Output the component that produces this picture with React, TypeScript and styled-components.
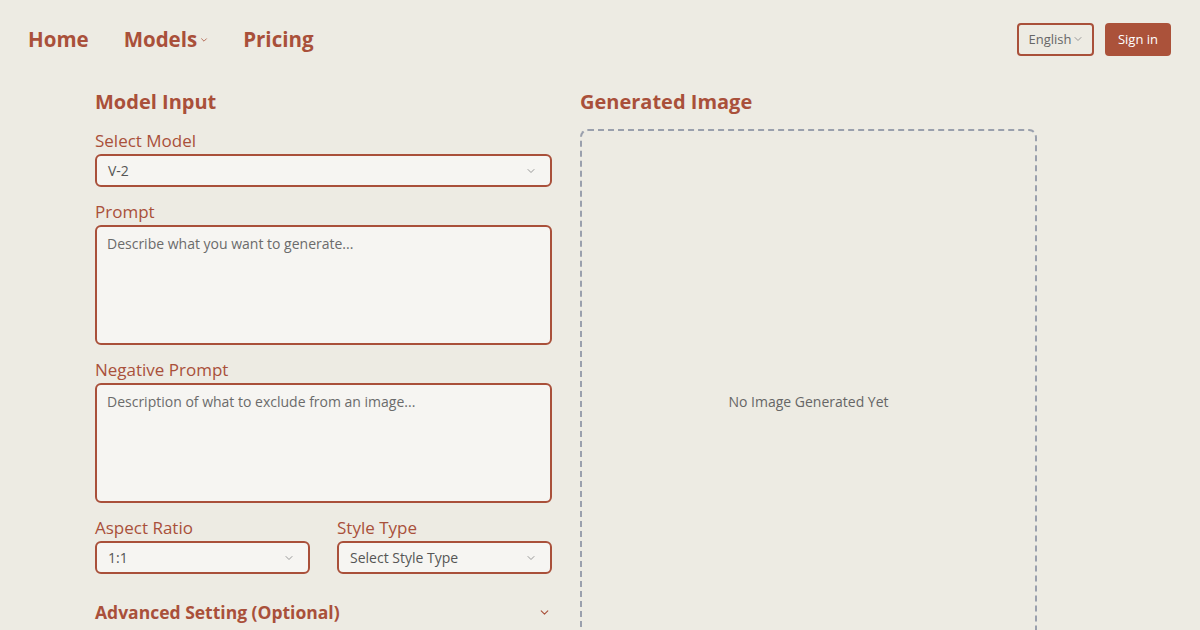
import React from 'react';
import styled, { createGlobalStyle } from 'styled-components';

const brown = '#a9503a';

const GlobalStyle = createGlobalStyle`
  html, body {
    margin: 0;
    padding: 0;
    background: #edebe3;
    font-family: "Open Sans", "Noto Sans", sans-serif;
  }
  * {
    box-sizing: border-box;
  }
`;

const Chevron: React.FC<{ size?: number; color?: string }> = ({ size = 10, color = '#999' }) => (
  <svg width={size} height={size} viewBox="0 0 10 10" fill="none">
    <path d="M2 3.5 L5 6.5 L8 3.5" stroke={color} strokeWidth="1" strokeLinecap="round" strokeLinejoin="round" />
  </svg>
);

const App: React.FC = () => {
  return (
    <Page>
      <GlobalStyle />
      <Header>
        <Nav>
          <NavLink>Home</NavLink>
          <NavLink>
            Models
            <NavCaret>
              <Chevron size={8} color={brown} />
            </NavCaret>
          </NavLink>
          <NavLink>Pricing</NavLink>
        </Nav>
        <Actions>
          <LangButton>
            English
            <Chevron size={10} color="#999" />
          </LangButton>
          <SignIn>Sign in</SignIn>
        </Actions>
      </Header>

      <Main>
        <Column>
          <Heading>Model Input</Heading>
          <Field>
            <Label>Select Model</Label>
            <Select>
              <SelectText>V-2</SelectText>
              <Chevron />
            </Select>
          </Field>
          <Field>
            <Label>Prompt</Label>
            <TextArea placeholder="Describe what you want to generate..." />
          </Field>
          <Field>
            <Label>Negative Prompt</Label>
            <TextArea placeholder="Description of what to exclude from an image..." />
          </Field>
          <Row>
            <Field>
              <Label>Aspect Ratio</Label>
              <Select>
                <SelectText>1:1</SelectText>
                <Chevron />
              </Select>
            </Field>
            <Field>
              <Label>Style Type</Label>
              <Select>
                <SelectText>Select Style Type</SelectText>
                <Chevron />
              </Select>
            </Field>
          </Row>
          <Advanced>
            <span>Advanced Setting (Optional)</span>
            <Chevron size={11} color={brown} />
          </Advanced>
        </Column>

        <Column>
          <Heading>Generated Image</Heading>
          <Preview>
            <Empty>No Image Generated Yet</Empty>
          </Preview>
        </Column>
      </Main>
    </Page>
  );
};

// Styled Components

const Page = styled.div`
  width: 1200px;
  height: 630px;
  overflow: hidden;
`;

const Header = styled.header`
  height: 78px;
  display: flex;
  align-items: center;
  justify-content: space-between;
  padding: 0 29px 0 28px;
`;

const Nav = styled.nav`
  display: flex;
  align-items: center;
  gap: 35px;
`;

const NavLink = styled.a`
  display: flex;
  align-items: center;
  color: ${brown};
  font-size: 20.5px;
  font-weight: 700;
  cursor: pointer;
`;

const NavCaret = styled.span`
  display: flex;
  margin-left: 3px;
  margin-top: 2px;
`;

const Actions = styled.div`
  display: flex;
  align-items: center;
  gap: 11px;
`;

const LangButton = styled.button`
  display: flex;
  align-items: center;
  gap: 1px;
  height: 33px;
  width: 77px;
  justify-content: center;
  border: 2px solid ${brown};
  border-radius: 4px;
  background: transparent;
  color: #666;
  font-family: inherit;
  font-size: 13px;
  cursor: pointer;
`;

const SignIn = styled.button`
  height: 33px;
  width: 66px;
  border: none;
  border-radius: 4px;
  background: #ab523a;
  color: #fff;
  font-family: inherit;
  font-size: 13px;
  cursor: pointer;
`;

const Main = styled.main`
  display: grid;
  grid-template-columns: 457px 457px;
  column-gap: 28px;
  align-items: start;
  padding: 10px 0 0 95px;
`;

const Column = styled.section`
  display: flex;
  flex-direction: column;
  gap: 13px;
`;

const Heading = styled.h2`
  margin: 0;
  color: ${brown};
  font-size: 20px;
  line-height: 28px;
  font-weight: 700;
`;

const Field = styled.div`
  display: flex;
  flex-direction: column;
  gap: 1px;
`;

const Label = styled.label`
  color: ${brown};
  font-size: 17px;
  line-height: 24px;
`;

const Select = styled.div`
  display: flex;
  align-items: center;
  justify-content: space-between;
  height: 33px;
  padding: 0 14px 0 11px;
  border: 2px solid ${brown};
  border-radius: 6px;
  background: #f6f5f2;
`;

const SelectText = styled.span`
  color: #555;
  font-size: 14px;
`;

const TextArea = styled.textarea`
  display: block;
  height: 120px;
  resize: none;
  padding: 7px 10px;
  border: 2px solid ${brown};
  border-radius: 6px;
  background: #f6f5f2;
  font-family: inherit;
  font-size: 14px;
  color: #555;
  outline: none;

  &::placeholder {
    color: #6b6b6b;
  }
`;

const Row = styled.div`
  display: grid;
  grid-template-columns: 1fr 1fr;
  gap: 27px;
`;

const Advanced = styled.div`
  display: flex;
  align-items: center;
  justify-content: space-between;
  margin-top: 11px;
  padding-right: 2px;
  color: ${brown};
  font-size: 17.5px;
  line-height: 28px;
  font-weight: 700;
`;

const Preview = styled.div`
  height: 544px;
  display: flex;
  align-items: center;
  justify-content: center;
  border: 2px dashed #9aa0ad;
  border-radius: 8px;
`;

const Empty = styled.p`
  margin: 0;
  color: #666;
  font-size: 14px;
`;

export default App;
